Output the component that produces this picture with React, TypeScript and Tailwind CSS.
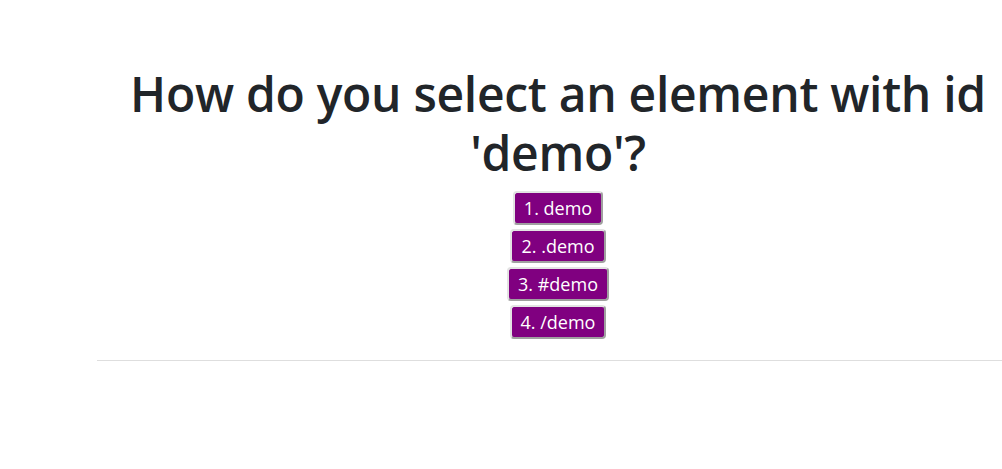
import React from 'react';

const options = ['1. demo', '2. .demo', '3. #demo', '4. /demo'];

export default function App() {
  return (
    <div className="w-[1002px] h-[469px] overflow-hidden bg-white font-['Open_Sans',sans-serif]">
      <div className="ml-[97px] w-[922px] pt-[64px]">
        <h1 className="text-center text-[48px] leading-[59px] font-semibold tracking-[-0.3px] text-[#212529]">
          How do you select an element with id 'demo'?
        </h1>
        <div className="mt-[9px] flex flex-col items-center gap-[4px]">
          {options.map((o) => (
            <button
              key={o}
              className="bg-[#800080] text-white text-[18px] leading-[24px] px-[9px] py-[3px] rounded-[4px] border-2 border-t-[#e3e3e3] border-l-[#e3e3e3] border-r-[#a0a0a0] border-b-[#a0a0a0]"
            >
              {o}
            </button>
          ))}
        </div>
        <hr className="mt-[21px] border-t border-[#dedede]" />
      </div>
    </div>
  );
}
